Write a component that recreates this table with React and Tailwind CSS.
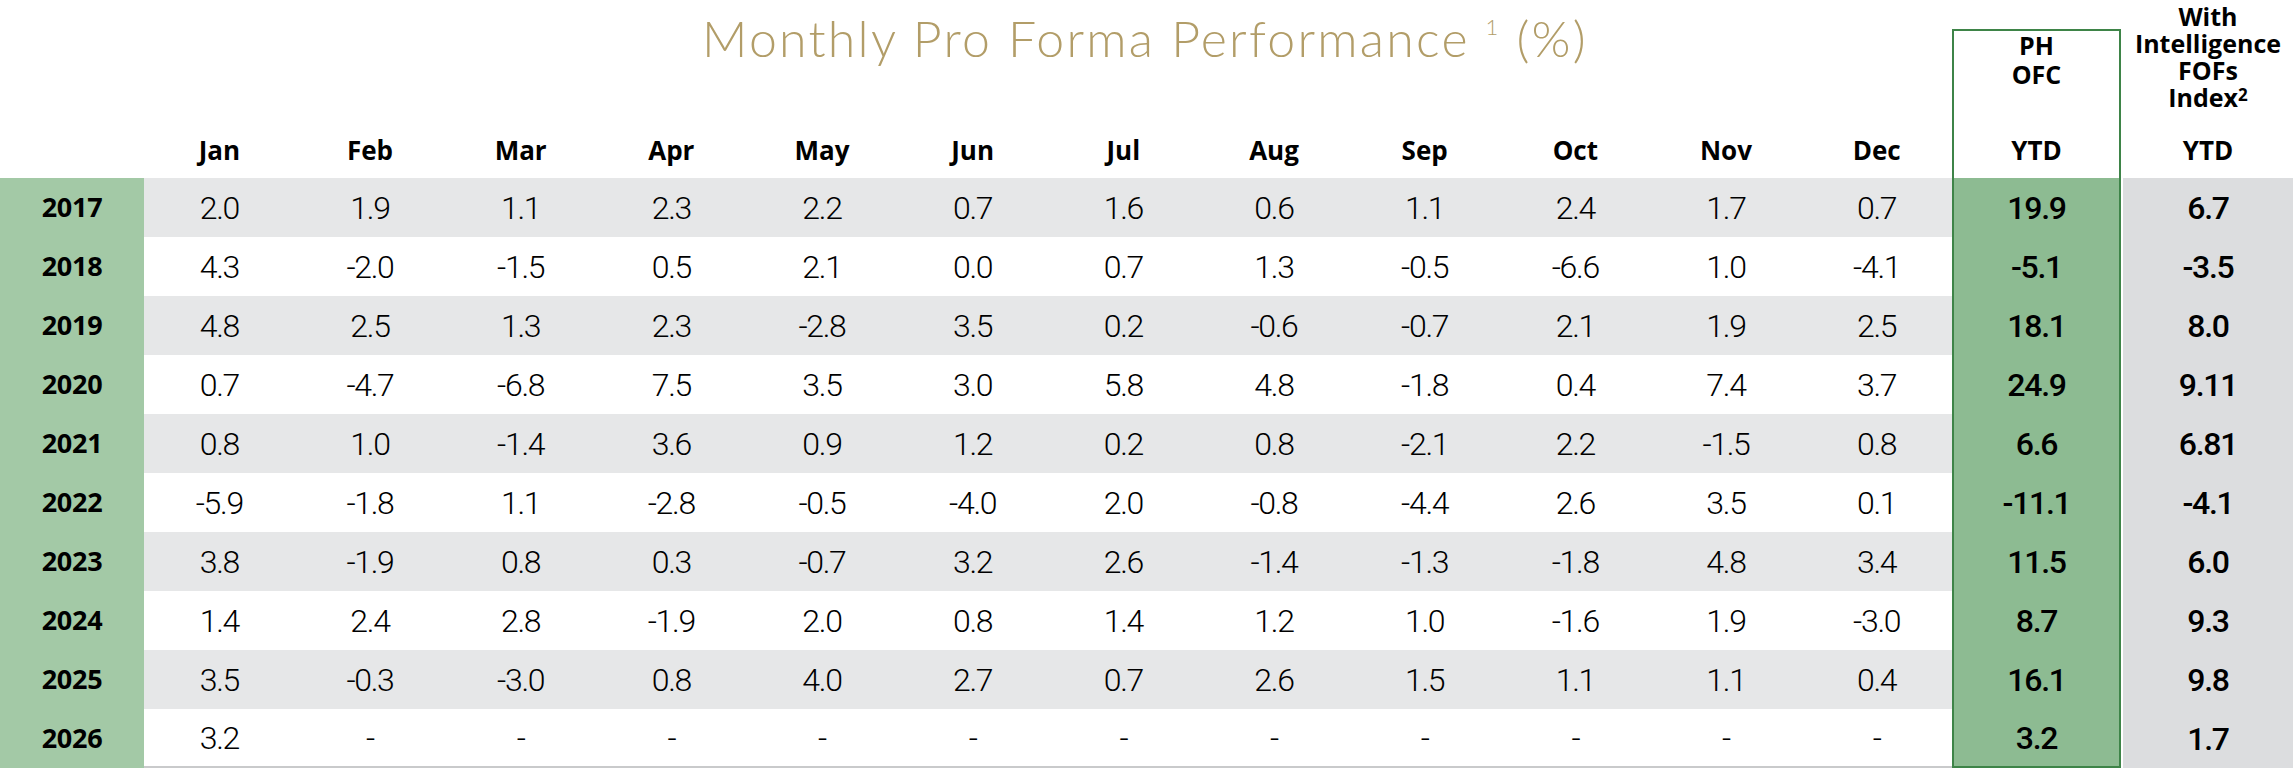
import React from 'react';

const months = ['Jan', 'Feb', 'Mar', 'Apr', 'May', 'Jun', 'Jul', 'Aug', 'Sep', 'Oct', 'Nov', 'Dec'];

const rows = [
  ['2017', ['2.0', '1.9', '1.1', '2.3', '2.2', '0.7', '1.6', '0.6', '1.1', '2.4', '1.7', '0.7'], '19.9', '6.7'],
  ['2018', ['4.3', '-2.0', '-1.5', '0.5', '2.1', '0.0', '0.7', '1.3', '-0.5', '-6.6', '1.0', '-4.1'], '-5.1', '-3.5'],
  ['2019', ['4.8', '2.5', '1.3', '2.3', '-2.8', '3.5', '0.2', '-0.6', '-0.7', '2.1', '1.9', '2.5'], '18.1', '8.0'],
  ['2020', ['0.7', '-4.7', '-6.8', '7.5', '3.5', '3.0', '5.8', '4.8', '-1.8', '0.4', '7.4', '3.7'], '24.9', '9.11'],
  ['2021', ['0.8', '1.0', '-1.4', '3.6', '0.9', '1.2', '0.2', '0.8', '-2.1', '2.2', '-1.5', '0.8'], '6.6', '6.81'],
  ['2022', ['-5.9', '-1.8', '1.1', '-2.8', '-0.5', '-4.0', '2.0', '-0.8', '-4.4', '2.6', '3.5', '0.1'], '-11.1', '-4.1'],
  ['2023', ['3.8', '-1.9', '0.8', '0.3', '-0.7', '3.2', '2.6', '-1.4', '-1.3', '-1.8', '4.8', '3.4'], '11.5', '6.0'],
  ['2024', ['1.4', '2.4', '2.8', '-1.9', '2.0', '0.8', '1.4', '1.2', '1.0', '-1.6', '1.9', '-3.0'], '8.7', '9.3'],
  ['2025', ['3.5', '-0.3', '-3.0', '0.8', '4.0', '2.7', '0.7', '2.6', '1.5', '1.1', '1.1', '0.4'], '16.1', '9.8'],
  ['2026', ['3.2', '-', '-', '-', '-', '-', '-', '-', '-', '-', '-', '-'], '3.2', '1.7'],
];

const headFont = "font-['Open_Sans',sans-serif] font-bold text-[25px] text-black";
const numFont = "font-['Roboto',sans-serif] text-[32px] tracking-[-0.04em] text-black";

export default function App() {
  return (
    <div className="w-[2293px] h-[774px] bg-white overflow-hidden">
      {/* header */}
      <div className="flex h-[178px]">
        <div className="w-[1952px] flex flex-col justify-between">
          <div className="pl-[338px] pt-[13px] flex justify-center">
            <h1 className="font-['Lato',sans-serif] font-light text-[50px] leading-none text-[#b29d68] tracking-[0.045em]">
              Monthly Pro Forma Performance <span className="text-[22px] align-top relative top-[3px]">1</span> (%)
            </h1>
          </div>
          <div className="flex pb-[15px]">
            <div className="w-[144px]" />
            <div className="flex-1 grid grid-cols-12">
              {months.map(m => (
                <div key={m} className="font-['Open_Sans',sans-serif] font-bold text-[26px] text-black leading-none text-center">{m}</div>
              ))}
            </div>
          </div>
        </div>
        <div className="w-[169px] mt-[29px] border-2 border-b-0 border-[#3e8448] flex flex-col justify-between items-center pb-[15px]">
          <div className={`${headFont} leading-[29px] text-center`}>
            <div>PH</div>
            <div>OFC</div>
          </div>
          <div className="font-['Open_Sans',sans-serif] font-bold text-[26px] text-black leading-none">YTD</div>
        </div>
        <div className="w-[2px]" />
        <div className="w-[170px] flex flex-col justify-between items-center pt-[3px] pb-[15px]">
          <div className={`${headFont} leading-[27px] text-center`}>
            <div>With</div>
            <div>Intelligence</div>
            <div>FOFs</div>
            <div>Index<span className="text-[17px] align-top relative -top-[3px]">2</span></div>
          </div>
          <div className="font-['Open_Sans',sans-serif] font-bold text-[26px] text-black leading-none">YTD</div>
        </div>
      </div>

      {/* body */}
      <div className="flex flex-col">
        {rows.map(([year, vals, ph, wi], i) => {
          const last = i === rows.length - 1;
          return (
            <div key={year} className="flex h-[59px]">
              <div className="w-[144px] bg-[#a3c9a6] flex items-center justify-center font-['Open_Sans',sans-serif] font-bold text-[27px] tracking-[-0.01em] text-black">{year}</div>
              <div className={`flex-1 grid grid-cols-12 ${i % 2 === 0 ? 'bg-[#e6e7e8]' : 'bg-white'} ${last ? 'border-b-2 border-[#c9cacb]' : ''}`}>
                {vals.map((v, j) => (
                  <div key={j} className={`${numFont} font-light flex items-center justify-center`}>{v}</div>
                ))}
              </div>
              <div className={`w-[169px] bg-[#8dbb92] border-x-2 border-[#3e8448] ${last ? 'border-b-2' : ''} flex items-center justify-center ${numFont} font-medium`}>
                {ph}
              </div>
              <div className="w-[2px]" />
              <div className={`w-[170px] bg-[#dcdddf] flex items-center justify-center ${numFont} font-medium`}>{wi}</div>
            </div>
          );
        })}
      </div>
    </div>
  );
}
